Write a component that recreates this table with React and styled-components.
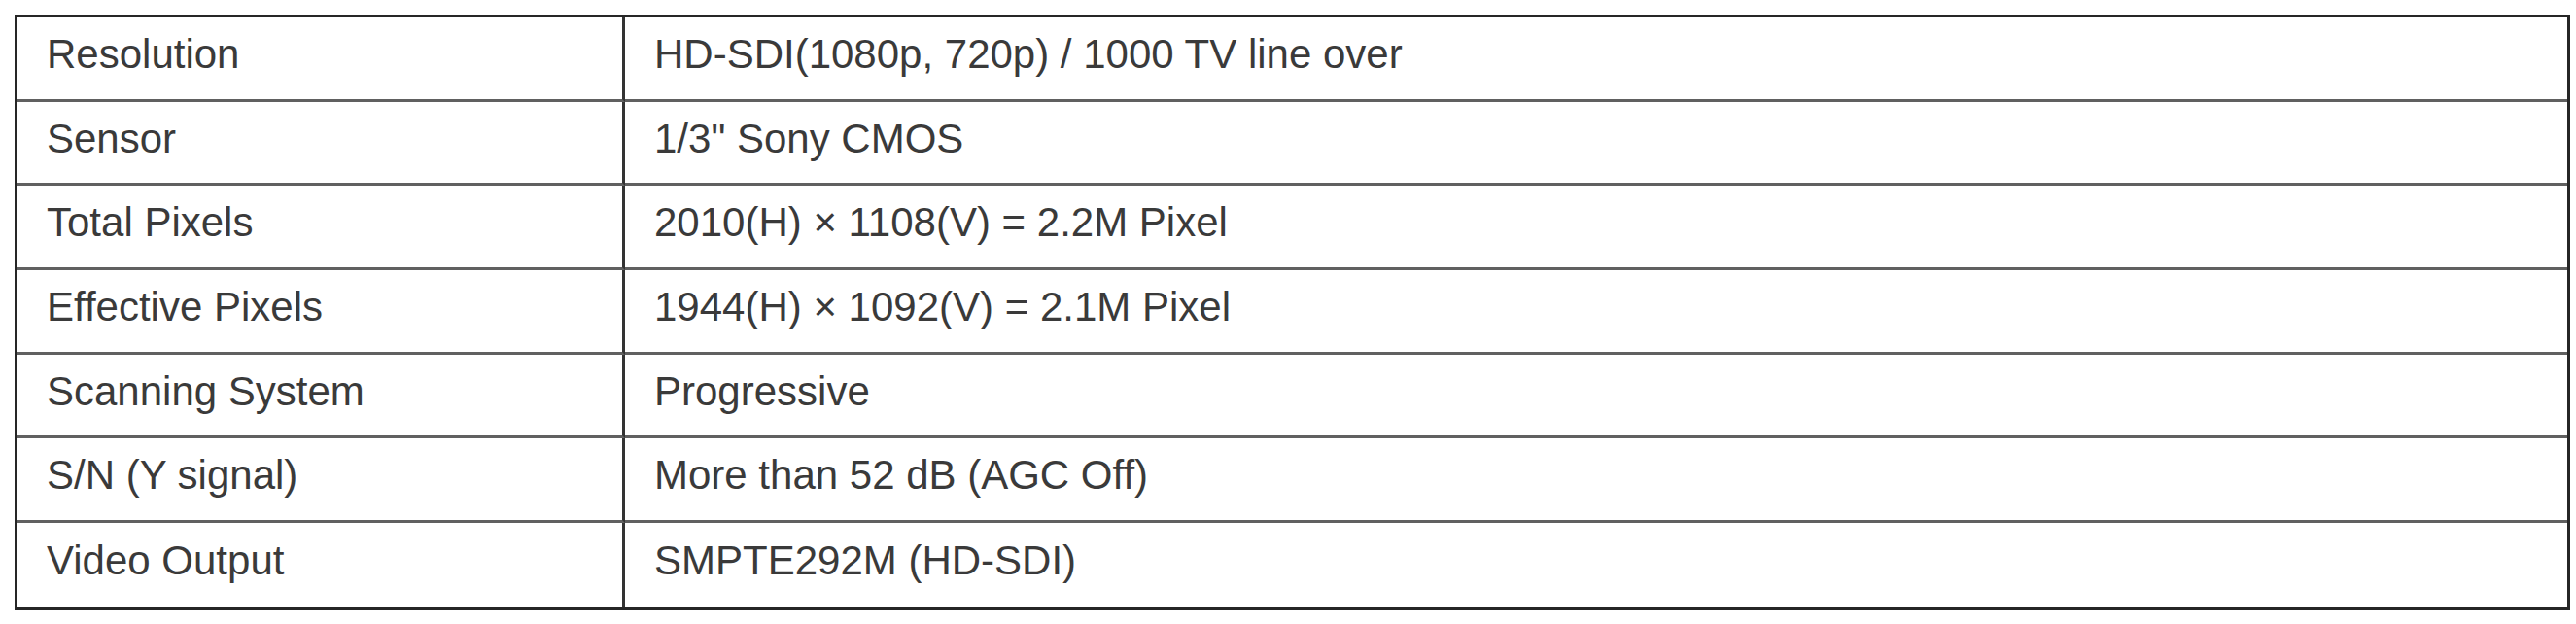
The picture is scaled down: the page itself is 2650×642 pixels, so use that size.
import React from 'react';
import styled, { createGlobalStyle } from 'styled-components';

const specs = [
  ['Resolution', 'HD-SDI(1080p, 720p) / 1000 TV line over'],
  ['Sensor', '1/3" Sony CMOS'],
  ['Total Pixels', '2010(H) × 1108(V) = 2.2M Pixel'],
  ['Effective Pixels', '1944(H) × 1092(V) = 2.1M Pixel'],
  ['Scanning System', 'Progressive'],
  ['S/N (Y signal)', 'More than 52 dB (AGC Off)'],
  ['Video Output', 'SMPTE292M (HD-SDI)'],
];

const GlobalStyle = createGlobalStyle`
  html, body {
    margin: 0;
    padding: 0;
    background: #fff;
  }
`;

const Page = styled.div`
  padding: 15px 0 0 15px;
  width: 2650px;
  height: 642px;
  box-sizing: border-box;
`;

const SpecTable = styled.div`
  display: grid;
  grid-template-columns: 625px 1fr;
  grid-auto-rows: 86.7px;
  width: 2629px;
  border: 3px solid #262626;
  box-sizing: border-box;
  font-family: 'Liberation Sans', Arial, sans-serif;
  font-size: 42px;
  color: #3a3a3a;
`;

const Cell = styled.div`
  display: flex;
  align-items: center;
  box-sizing: border-box;
  padding: 0 0 8px 30px;
  border-bottom: ${(p) => (p.$last ? 'none' : '3px solid #606060')};
  border-right: ${(p) => (p.$label ? '3px solid #333' : 'none')};
  white-space: nowrap;
`;

function App() {
  return (
    <Page>
      <GlobalStyle />
      <SpecTable>
        {specs.map(([label, value], i) => (
          <React.Fragment key={label}>
            <Cell $label $last={i === specs.length - 1}>{label}</Cell>
            <Cell $last={i === specs.length - 1}>{value}</Cell>
          </React.Fragment>
        ))}
      </SpecTable>
    </Page>
  );
}

export default App;
